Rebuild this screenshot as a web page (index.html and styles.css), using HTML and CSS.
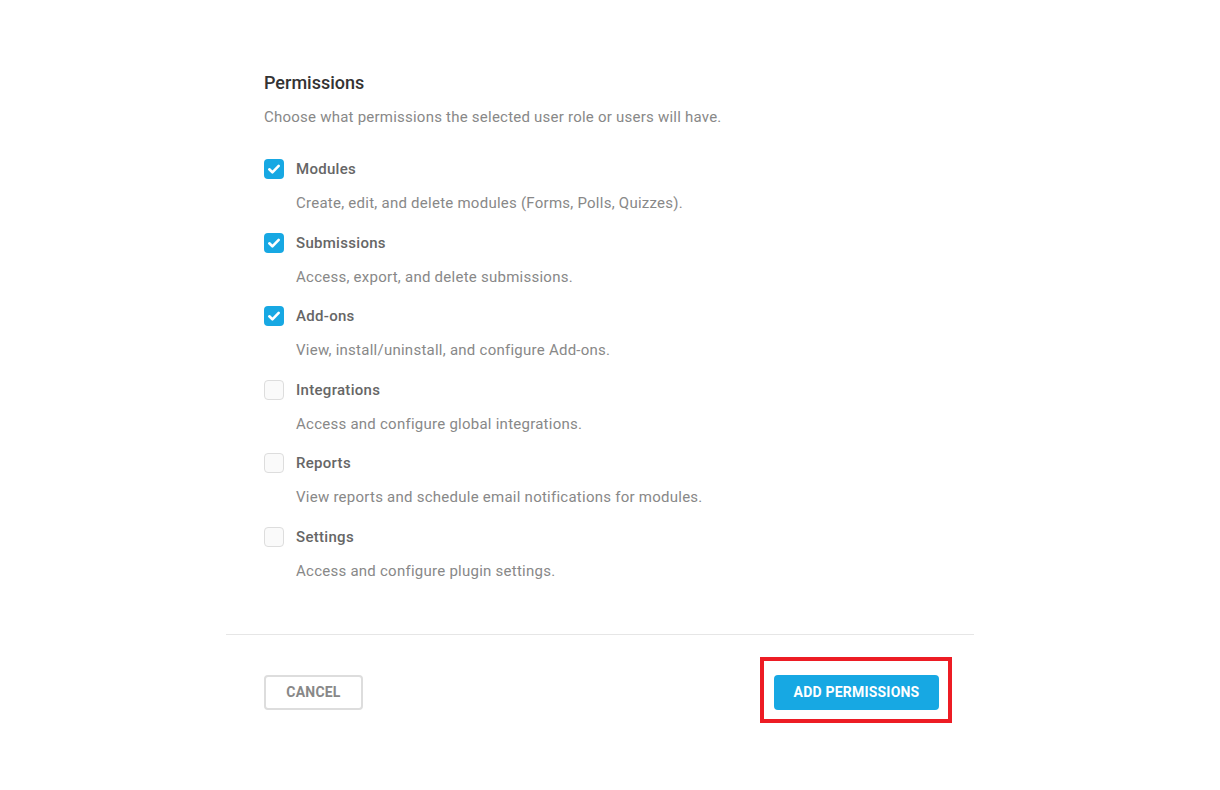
FILE: index.html
```html
<!DOCTYPE html>
<html lang="en">
  <head>
    <meta charset="UTF-8" />
    <title>Permissions</title>
    <link rel="stylesheet" href="styles.css">
  </head>
  <body>
    <div class="modal">
      <div class="body">
        <h2>Permissions</h2>
        <p class="intro">Choose what permissions the selected user role or users will have.</p>

        <div class="perm">
          <label class="row"><span class="check on"><svg viewBox="0 0 20 20"><path d="M5.3 10.3l3.1 3 6.3-6.4" /></svg></span>Modules</label>
          <p class="desc">Create, edit, and delete modules (Forms, Polls, Quizzes).</p>
        </div>
        <div class="perm">
          <label class="row"><span class="check on"><svg viewBox="0 0 20 20"><path d="M5.3 10.3l3.1 3 6.3-6.4" /></svg></span>Submissions</label>
          <p class="desc">Access, export, and delete submissions.</p>
        </div>
        <div class="perm">
          <label class="row"><span class="check on"><svg viewBox="0 0 20 20"><path d="M5.3 10.3l3.1 3 6.3-6.4" /></svg></span>Add-ons</label>
          <p class="desc">View, install/uninstall, and configure Add-ons.</p>
        </div>
        <div class="perm">
          <label class="row"><span class="check"></span>Integrations</label>
          <p class="desc">Access and configure global integrations.</p>
        </div>
        <div class="perm">
          <label class="row"><span class="check"></span>Reports</label>
          <p class="desc">View reports and schedule email notifications for modules.</p>
        </div>
        <div class="perm">
          <label class="row"><span class="check"></span>Settings</label>
          <p class="desc">Access and configure plugin settings.</p>
        </div>
      </div>

      <div class="footer">
        <button class="btn ghost">CANCEL</button>
        <span class="mark"><button class="btn blue">ADD PERMISSIONS</button></span>
      </div>
    </div>
  </body>
</html>
```

FILE: styles.css
```css
* {
  margin: 0;
  padding: 0;
  box-sizing: border-box;
}
body {
  background-color: #fff;
  font-family: Roboto, "Liberation Sans", sans-serif;
}
.modal {
  width: 748px;
  margin-left: 226px;
  padding-bottom: 60px;
}
.body {
  padding: 72px 38px 0;
}
h2 {
  font-size: 18px;
  line-height: 22px;
  font-weight: 500;
  color: #333;
  margin-bottom: 12px;
}
.intro {
  font-size: 15px;
  line-height: 22px;
  color: #888;
  letter-spacing: 0.23px;
  margin-bottom: 30px;
}
.perm {
  margin-bottom: 17.5px;
}
.perm:last-child {
  margin-bottom: 0;
}
.row {
  display: flex;
  align-items: center;
  gap: 12px;
  font-size: 15px;
  line-height: 22px;
  font-weight: 500;
  color: #666;
  letter-spacing: 0.3px;
}
.check {
  width: 20px;
  height: 20px;
  border-radius: 4px;
  border: 1px solid #ddd;
  background-color: #fafafa;
  display: flex;
}
.check.on {
  border: none;
  background-color: #17a8e3;
}
.check svg {
  width: 20px;
  height: 20px;
  fill: none;
  stroke: #fff;
  stroke-width: 2.6;
  stroke-linecap: round;
  stroke-linejoin: round;
}
.desc {
  margin: 12px 0 0 32px;
  font-size: 15px;
  line-height: 22px;
  color: #888;
  letter-spacing: 0.25px;
}
.footer {
  margin-top: 52px;
  border-top: 1px solid #e6e6e6;
  padding: 40px 35px 0 38px;
  display: flex;
  justify-content: space-between;
  align-items: center;
}
.btn {
  height: 35px;
  border-radius: 4px;
  font-family: Roboto, "Liberation Sans", sans-serif;
  font-size: 14px;
  font-weight: 700;
  letter-spacing: 0.2px;
}
.ghost {
  width: 99px;
  background-color: #fff;
  border: 2px solid #ddd;
  color: #888;
}
.blue {
  width: 165px;
  background-color: #17a8e3;
  border: none;
  color: #fff;
}
.mark {
  position: relative;
  display: flex;
}
.mark::after {
  content: "";
  position: absolute;
  left: -14px;
  right: -13px;
  top: -18px;
  bottom: -13px;
  border: 4px solid #ed1c24;
}
```
